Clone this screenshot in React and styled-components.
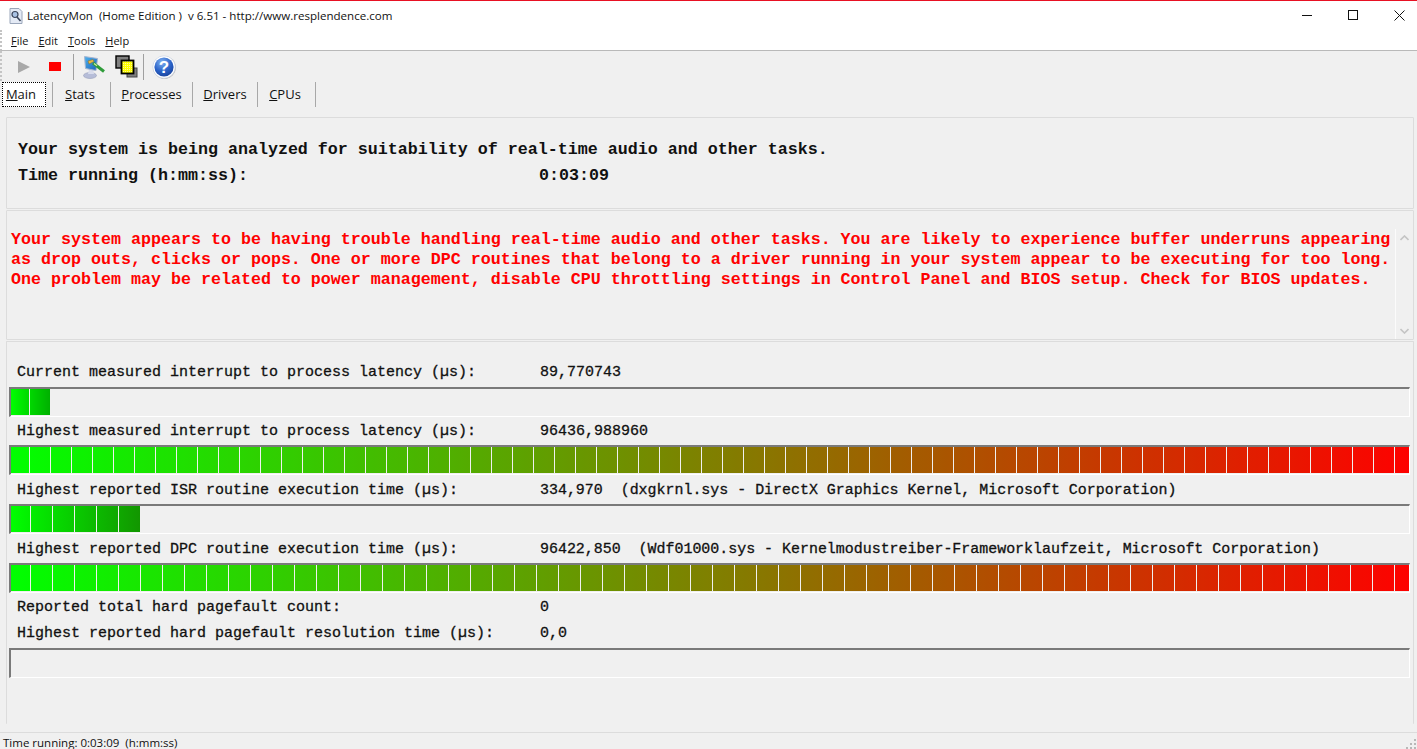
import styled, { createGlobalStyle } from "styled-components";

const GlobalStyle = createGlobalStyle`
  html, body {
    margin: 0;
    padding: 0;
    height: 100%;
    overflow: hidden;
    background: #f0f0f0;
  }
`;

const lerp = (a, b, t) => Math.round(a + (b - a) * t);

// each bar runs from lime to its own end colour, one gradient per block
const BARS = {
  current: { first: 18, block: 20, count: 2, end: [0, 176, 0] },
  interrupt: { first: 18, block: 20, count: 67, end: [255, 0, 0] },
  isr: { first: 19, block: 21, count: 6, end: [18, 150, 0] },
  dpc: { first: 19, block: 21, count: 64, end: [255, 0, 0] },
};

function blockColor(end, t) {
  return `rgb(${lerp(0, end[0], t)},${lerp(255, end[1], t)},${lerp(0, end[2], t)})`;
}

function Meter({ bar }) {
  const cfg = BARS[bar];
  return (
    <Track>
      {cfg &&
        Array.from({ length: cfg.count }, (_, i) => (
          <Block
            key={i}
            style={{
              width: i === 0 ? cfg.first : cfg.block,
              background: `linear-gradient(to right, ${blockColor(cfg.end, i / cfg.count)}, ${blockColor(cfg.end, (i + 1) / cfg.count)})`,
            }}
          />
        ))}
    </Track>
  );
}

function Hot({ children, rest }) {
  return (
    <span>
      <u>{children}</u>
      {rest}
    </span>
  );
}

export default function App() {
  return (
    <Page>
      <GlobalStyle />
      <TitleBar>
        <AppIcon viewBox="0 0 16 16">
          <path d="M2 0.5h9l3 3v12H2z" fill="#e4eaf5" stroke="#9aa6ba" />
          <circle cx="7" cy="6.5" r="3" fill="#a9c2e4" stroke="#3c465c" strokeWidth="1.2" />
          <path d="M9 9l3.5 4" stroke="#3c465c" strokeWidth="1.6" />
        </AppIcon>
        <TitleText>LatencyMon&nbsp; (Home Edition ) &nbsp;v 6.51 - http://www.resplendence.com</TitleText>
        <WindowButtons>
          <WindowButton>
            <svg width="11" height="11" viewBox="0 0 11 11">
              <path d="M0 5.5h10" stroke="#111" fill="none" />
            </svg>
          </WindowButton>
          <WindowButton>
            <svg width="11" height="11" viewBox="0 0 11 11">
              <rect x="0.5" y="0.5" width="9" height="9" stroke="#111" fill="none" />
            </svg>
          </WindowButton>
          <WindowButton>
            <svg width="11" height="11" viewBox="0 0 11 11">
              <path d="M0.5 0.5l10 10M10.5 0.5l-10 10" stroke="#111" fill="none" />
            </svg>
          </WindowButton>
        </WindowButtons>
      </TitleBar>

      <MenuBar>
        <MenuItem><Hot rest="ile">F</Hot></MenuItem>
        <MenuItem><Hot rest="dit">E</Hot></MenuItem>
        <MenuItem><Hot rest="ools">T</Hot></MenuItem>
        <MenuItem><Hot rest="elp">H</Hot></MenuItem>
      </MenuBar>

      <Toolbar>
        <ToolIcon viewBox="0 0 16 16" $gap={15}>
          <path d="M2 2l12 6-12 6z" fill="#a8a8a8" />
        </ToolIcon>
        <ToolIcon viewBox="0 0 16 16" $gap={10}>
          <rect x="2" y="3" width="12" height="9" fill="#ff0000" />
        </ToolIcon>
        <ToolSep />
        <BigIcon viewBox="0 0 24 24" $gap={9}>
          <defs>
            <linearGradient id="screen" x1="0" y1="0" x2="1" y2="1">
              <stop offset="0" stopColor="#4fb2ee" />
              <stop offset="1" stopColor="#1c62b8" />
            </linearGradient>
          </defs>
          <ellipse cx="8" cy="20.5" rx="6.5" ry="3" fill="#b6bdd8" stroke="#8a92b0" strokeWidth="0.5" />
          <path d="M7 14h4l1 5H6z" fill="#d8dcec" />
          <path d="M2.5 1.5l13 2-1.5 12-10.5-2z" fill="url(#screen)" stroke="#a8b6d0" />
          <path d="M6 6l5-1.5 1 2-5 2.5z" fill="#e6b948" stroke="#8a6a20" strokeWidth="0.5" />
          <path d="M11 8l11 8.5" stroke="#2f9c3a" strokeWidth="3" />
          <path d="M12 8.5l3 2.3" stroke="#cfe8a8" strokeWidth="1.2" />
        </BigIcon>
        <BigIcon viewBox="0 0 24 24" $gap={4}>
          <defs>
            <pattern id="dither" width="2" height="2" patternUnits="userSpaceOnUse">
              <rect width="2" height="2" fill="#ffff00" />
              <rect width="1" height="1" fill="#fff8a0" />
            </pattern>
          </defs>
          <rect x="1" y="1" width="13" height="12" fill="#808080" stroke="#000" strokeWidth="1.4" />
          <rect x="12" y="13" width="10" height="9" fill="#808080" stroke="#444" />
          <rect x="6.5" y="5.5" width="12" height="13" fill="url(#dither)" stroke="#000" strokeWidth="1.8" />
        </BigIcon>
        <ToolSep />
        <BigIcon viewBox="0 0 24 24" $gap={0}>
          <defs>
            <radialGradient id="helpBall" cx="0.4" cy="0.25" r="0.85">
              <stop offset="0" stopColor="#7fb0f0" />
              <stop offset="0.55" stopColor="#2a62c8" />
              <stop offset="1" stopColor="#153c94" />
            </radialGradient>
          </defs>
          <circle cx="12.4" cy="12.4" r="11.4" fill="#b8b8b8" />
          <circle cx="12" cy="12" r="11.2" fill="#fff" stroke="#c4cee0" strokeWidth="0.6" />
          <circle cx="12" cy="12" r="9.6" fill="url(#helpBall)" />
          <HelpMark x="12" y="18" textAnchor="middle">?</HelpMark>
        </BigIcon>
      </Toolbar>

      <Tabs>
        <ActiveTab $w={44}><Hot rest="ain">M</Hot></ActiveTab>
        <TabSep />
        <Tab $w={57} $pad={3}><Hot rest="tats">S</Hot></Tab>
        <TabSep />
        <Tab $w={81}><Hot rest="rocesses">P</Hot></Tab>
        <TabSep />
        <Tab $w={64}><Hot rest="rivers">D</Hot></Tab>
        <TabSep />
        <Tab $w={57} $pad={3}><Hot rest="PUs">C</Hot></Tab>
        <TabSep />
      </Tabs>

      <Panels>
        <SummaryPanel>
          <BigLine>Your system is being analyzed for suitability of real-time audio and other tasks.</BigLine>
          <BigLine>
            <SummaryKey>Time running (h:mm:ss):</SummaryKey>
            0:03:09
          </BigLine>
        </SummaryPanel>

        <WarningPanel>
          <WarningText>
            Your system appears to be having trouble handling real-time audio and other tasks. You are likely to experience buffer underruns appearing
            <br />
            as drop outs, clicks or pops. One or more DPC routines that belong to a driver running in your system appear to be executing for too long.
            <br />
            One problem may be related to power management, disable CPU throttling settings in Control Panel and BIOS setup. Check for BIOS updates.
          </WarningText>
          <ScrollBar>
            <svg width="9" height="6" viewBox="0 0 9 6">
              <path d="M0.5 5L4.5 1l4 4" stroke="#c4c4c4" strokeWidth="1.6" fill="none" />
            </svg>
            <svg width="9" height="6" viewBox="0 0 9 6">
              <path d="M0.5 1l4 4 4-4" stroke="#c4c4c4" strokeWidth="1.6" fill="none" />
            </svg>
          </ScrollBar>
        </WarningPanel>

        <MetersPanel>
          <Row>
            <Label>Current measured interrupt to process latency (µs):</Label>
            89,770743
          </Row>
          <Meter bar="current" />
          <Row>
            <Label>Highest measured interrupt to process latency (µs):</Label>
            96436,988960
          </Row>
          <Meter bar="interrupt" />
          <Row>
            <Label>Highest reported ISR routine execution time (µs):</Label>
            <Detail>334,970&nbsp; (dxgkrnl.sys - DirectX Graphics Kernel, Microsoft Corporation)</Detail>
          </Row>
          <Meter bar="isr" />
          <Row>
            <Label>Highest reported DPC routine execution time (µs):</Label>
            <Detail>96422,850&nbsp; (Wdf01000.sys - Kernelmodustreiber-Frameworklaufzeit, Microsoft Corporation)</Detail>
          </Row>
          <Meter bar="dpc" />
          <ShortRow>
            <Label>Reported total hard pagefault count:</Label>
            0
          </ShortRow>
          <Row>
            <Label>Highest reported hard pagefault resolution time (µs):</Label>
            0,0
          </Row>
          <Meter bar="none" />
        </MetersPanel>
      </Panels>

      <StatusBar>
        Time running: 0:03:09&nbsp; (h:mm:ss)
        <Grip viewBox="0 0 12 12">
          <path d="M9 2h2v2H9zM5 6h2v2H5zM9 6h2v2H9zM1 10h2v2H1zM5 10h2v2H5zM9 10h2v2H9z" fill="#b8b8b8" />
        </Grip>
      </StatusBar>
    </Page>
  );
}

const Page = styled.div`
  width: 1417px;
  height: 749px;
  display: flex;
  flex-direction: column;
  overflow: hidden;
  background: #f0f0f0;
  color: #000;
  font-family: "Open Sans", "Liberation Sans", Arial, sans-serif;
`;

const TitleBar = styled.div`
  height: 30px;
  box-sizing: border-box;
  border-top: 1px solid #e81123;
  padding-left: 8px;
  display: flex;
  align-items: center;
  background: #fff;
  flex-shrink: 0;
`;

const AppIcon = styled.svg`
  width: 16px;
  height: 16px;
  margin-right: 3px;
`;

const TitleText = styled.span`
  font-size: 11.57px;
  flex: 1;
  white-space: nowrap;
  color: #111;
`;

const WindowButtons = styled.div`
  display: flex;
  margin-right: -5px;
`;

const WindowButton = styled.div`
  width: 46px;
  height: 29px;
  display: flex;
  align-items: center;
  justify-content: center;
`;

const MenuBar = styled.div`
  height: 21px;
  box-sizing: border-box;
  padding: 1px 0 0 9px;
  display: flex;
  align-items: center;
  gap: 10px;
  background: #fff;
  border-left: 2px dotted #c4c4c4;
  border-bottom: 1px solid #b9b9b9;
  flex-shrink: 0;
`;

const MenuItem = styled.div`
  font-size: 11px;
  color: #111;
`;

const Toolbar = styled.div`
  height: 30px;
  box-sizing: border-box;
  padding: 1px 0 0 14px;
  display: flex;
  align-items: center;
  border-left: 2px dotted #c4c4c4;
  flex-shrink: 0;
`;

const ToolIcon = styled.svg`
  width: 16px;
  height: 16px;
  margin-right: ${(p) => p.$gap}px;
`;

const ToolSep = styled.div`
  width: 1px;
  height: 26px;
  background: #a0a0a0;
  margin-right: 8px;
`;

const BigIcon = styled.svg`
  width: 24px;
  height: 24px;
  margin-right: ${(p) => p.$gap}px;
`;

const HelpMark = styled.text`
  font-family: "Liberation Sans", Arial, sans-serif;
  font-weight: 700;
  font-size: 17px;
  fill: #fff;
`;

const Tabs = styled.div`
  height: 25px;
  margin-top: 1px;
  padding-left: 2px;
  display: flex;
  align-items: stretch;
  flex-shrink: 0;
`;

const Tab = styled.div`
  width: ${(p) => p.$w}px;
  box-sizing: border-box;
  padding-right: ${(p) => p.$pad || 0}px;
  padding-bottom: 2px;
  display: flex;
  align-items: center;
  justify-content: center;
  font-size: 13px;
  color: #111;
`;

const ActiveTab = styled(Tab)`
  background: #fff;
  border: 1px dotted #000;
  margin-right: 6px;
  padding-right: 6px;
`;

const TabSep = styled.div`
  width: 1px;
  background: #a8a8a8;
`;

const Panels = styled.div`
  padding: 10px 3px 0 6px;
  display: flex;
  flex-direction: column;
  gap: 1px;
  flex: 1;
  min-height: 0;
`;

const Panel = styled.div`
  box-sizing: border-box;
  border: 1px solid #dcdcdc;
  border-radius: 1px;
  font-family: "Liberation Mono", "Courier New", monospace;
  font-weight: 700;
`;

const SummaryPanel = styled(Panel)`
  height: 92px;
  padding: 19px 0 0 11px;
`;

const BigLine = styled.div`
  font-size: 16.67px;
  line-height: 26px;
  white-space: pre;
  color: #111;
`;

const SummaryKey = styled.span`
  display: inline-block;
  width: 521px;
`;

const WarningPanel = styled(Panel)`
  height: 130px;
  display: flex;
  justify-content: space-between;
`;

const WarningText = styled.div`
  padding: 19px 0 0 4px;
  font-size: 16.67px;
  line-height: 20px;
  color: #ff0000;
  white-space: pre;
`;

const ScrollBar = styled.div`
  width: 18px;
  margin: 18px 0 0;
  box-sizing: border-box;
  border-left: 1px solid #fbfbfb;
  display: flex;
  flex-direction: column;
  justify-content: space-between;
  align-items: center;
  padding: 6px 0 5px;
`;

const MetersPanel = styled(Panel)`
  flex: 1;
  border-bottom: none;
  margin-bottom: 8px;
  padding: 16px 3px 0 2px;
`;

const Row = styled.div`
  font-size: 15px;
  line-height: 30px;
  height: 28.67px;
  padding-left: 8px;
  color: #111;
  white-space: pre;
  font-weight: 400;
  -webkit-text-stroke: 0.3px #111;
`;

const ShortRow = styled(Row)`
  height: 26.5px;
`;

const Label = styled.span`
  display: inline-block;
  width: 523px;
`;

const Detail = styled.span`
  font-size: 14.95px;
`;

const Track = styled.div`
  height: 30px;
  box-sizing: border-box;
  border-top: 2px solid #7a7a7a;
  border-left: 2px solid #7a7a7a;
  border-right: 1px solid #fff;
  border-bottom: 1px solid #fff;
  padding-bottom: 1px;
  display: flex;
  gap: 1px;
  overflow: hidden;
`;

const Block = styled.div`
  flex-shrink: 0;
`;

const StatusBar = styled.div`
  height: 17px;
  box-sizing: border-box;
  border-top: 1px solid #dcdcdc;
  padding-left: 3px;
  font-size: 11.5px;
  line-height: 20px;
  color: #111;
  flex-shrink: 0;
  position: relative;
`;

const Grip = styled.svg`
  position: absolute;
  right: 0;
  bottom: 0;
  width: 12px;
  height: 12px;
`;
